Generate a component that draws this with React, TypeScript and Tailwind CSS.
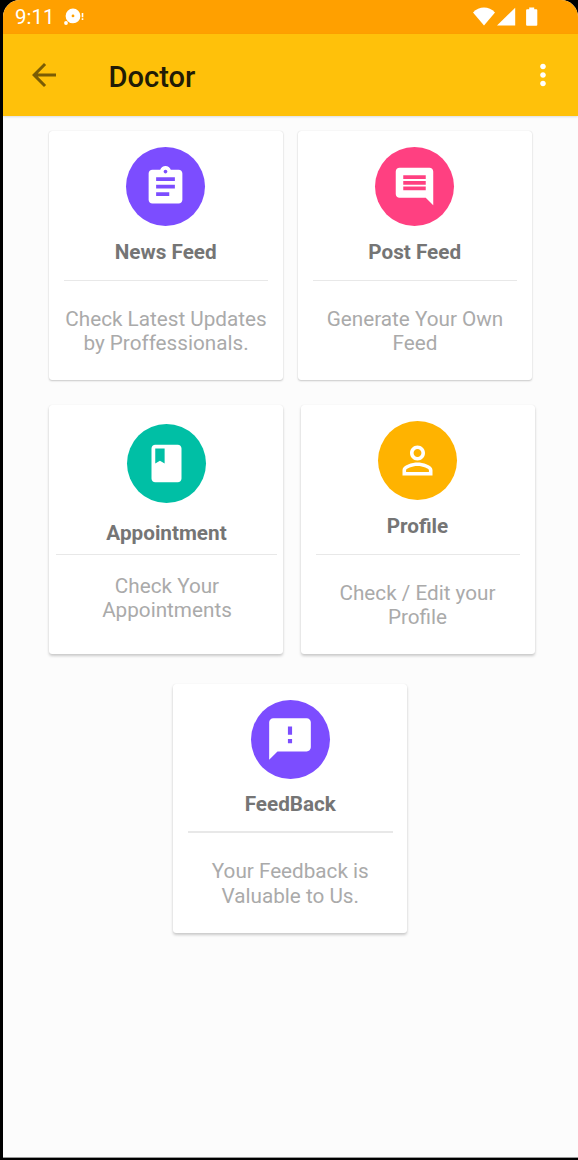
import React from "react";

const icons = {
  assignment:
    "M19 3h-4.18C14.4 1.84 13.3 1 12 1c-1.3 0-2.4.84-2.82 2H5c-1.1 0-2 .9-2 2v14c0 1.1.9 2 2 2h14c1.1 0 2-.9 2-2V5c0-1.1-.9-2-2-2zm-7 0c.55 0 1 .45 1 1s-.45 1-1 1-1-.45-1-1 .45-1 1-1zm2 14H7v-2h7v2zm3-4H7v-2h10v2zm0-4H7V7h10v2z",
  comment:
    "M21.99 4c0-1.1-.89-2-1.99-2H4c-1.1 0-2 .9-2 2v12c0 1.1.9 2 2 2h14l4 4-.01-18zM18 14H6v-2h12v2zm0-3H6V9h12v2zm0-3H6V6h12v2z",
  book: "M18 2H6c-1.1 0-2 .9-2 2v16c0 1.1.9 2 2 2h12c1.1 0 2-.9 2-2V4c0-1.1-.9-2-2-2zM6 4h5v8l-2.5-1.5L6 12V4z",
  person:
    "M12 5.9c1.16 0 2.1.94 2.1 2.1s-.94 2.1-2.1 2.1S9.9 9.16 9.9 8s.94-2.1 2.1-2.1m0 9c2.97 0 6.1 1.46 6.1 2.1v1.1H5.9V17c0-.64 3.13-2.1 6.1-2.1M12 4C9.79 4 8 5.79 8 8s1.79 4 4 4 4-1.79 4-4-1.79-4-4-4zm0 9c-2.67 0-8 1.34-8 4v3h16v-3c0-2.66-5.33-4-8-4z",
  feedback:
    "M20 2H4c-1.1 0-1.99.9-1.99 2L2 22l4-4h14c1.1 0 2-.9 2-2V4c0-1.1-.9-2-2-2zm-7 12h-2v-2h2v2zm0-4h-2V6h2v4z",
};

type CardProps = {
  icon: keyof typeof icons;
  iconSize?: string;
  color: string;
  title: string;
  lines: [string, string];
  shadow?: string;
  pad?: string;
  circleInset?: string;
  titleGap?: string;
  rule?: string;
  textGap?: string;
};

function Card({
  icon,
  iconSize = "size-[45px]",
  color,
  title,
  lines,
  shadow = "shadow-[0_1px_2px_rgba(0,0,0,0.2),0_0_1px_rgba(0,0,0,0.15)]",
  pad = "pt-4",
  circleInset = "mr-[1.2px]",
  titleGap = "mt-[13.5px] mr-[0.6px]",
  rule = "mt-4 w-[204px] h-px",
  textGap = "mt-[26px]",
}: CardProps) {
  return (
    <button className={`flex h-[249px] w-[234px] shrink-0 flex-col items-center rounded-[3px] bg-white ${shadow} ${pad}`}>
      <span className={`flex size-[79px] shrink-0 items-center justify-center rounded-full ${color} ${circleInset}`}>
        <svg viewBox="0 0 24 24" className={`${iconSize} fill-white`}>
          <path d={icons[icon]} />
        </svg>
      </span>
      <span className={`text-[20.7px] leading-6 font-bold text-[#757575] ${titleGap}`}>{title}</span>
      <span className={`shrink-0 bg-[#e8e8e8] ${rule}`} />
      <span className={`text-[20.7px] leading-[24.3px] whitespace-nowrap text-[#aaaaaa] ${textGap}`}>
        {lines[0]}
        <br />
        {lines[1]}
      </span>
    </button>
  );
}

function StatusBar() {
  return (
    <div className="flex h-[34px] items-center bg-[#ffa000] pl-3 text-white">
      <span className="text-[20.5px] leading-6">9:11</span>
      <svg viewBox="0 0 22 20" className="ml-2 h-5 w-[22px] fill-white">
        <path fillRule="evenodd" d="M10 1.5a7.4 7.4 0 1 1 0 14.8 7.4 7.4 0 0 1 0-14.8zm0 6a1.4 1.4 0 1 0 0 2.8 1.4 1.4 0 0 0 0-2.8z" />
        <circle cx="3" cy="16" r="1.9" />
        <path d="M18.7 6h1.6v4.2h-1.6zM18.7 11.3h1.6v1.6h-1.6z" />
      </svg>
      <svg viewBox="0 0 66 20" className="mr-[39px] ml-auto h-5 w-[66px] fill-white">
        <path d="M0 5.4C6-1.2 16-1.2 22 5.4L11 18.6z" />
        <path d="M24 18.5 42.2.7v17.8z" />
        <path d="M56.2.6h5v1.7h2.1q1 0 1 1v14.5q0 1-1 1h-9.2q-1 0-1-1V3.3q0-1 1-1h2.1z" />
      </svg>
    </div>
  );
}

function AppBar() {
  return (
    <header className="flex h-[82px] items-center bg-[#ffc10a] shadow-[0_1px_2px_rgba(0,0,0,0.12)]">
      <svg viewBox="0 0 24 24" className="ml-[23px] size-9 fill-[#7a5c05]">
        <path d="M20 11H7.83l5.59-5.59L12 4l-8 8 8 8 1.41-1.41L7.83 13H20v-2z" />
      </svg>
      <h1 className="mt-[3px] ml-[46.5px] text-[29.1px] leading-9 font-medium text-[#211b06]">Doctor</h1>
      <svg viewBox="0 0 24 24" className="mr-[18px] ml-auto size-[34px] fill-white">
        <path d="M12 8c1.1 0 2-.9 2-2s-.9-2-2-2-2 .9-2 2 .9 2 2 2zm0 2c-1.1 0-2 .9-2 2s.9 2 2 2 2-.9 2-2-.9-2-2-2zm0 6c-1.1 0-2 .9-2 2s.9 2 2 2 2-.9 2-2-.9-2-2-2z" />
      </svg>
    </header>
  );
}

export default function App() {
  const raised = "shadow-[0_2px_3px_rgba(0,0,0,0.2),0_0_1px_rgba(0,0,0,0.1)]";
  return (
    <div className="h-[1160px] w-[578px] overflow-hidden bg-black pl-[3px] font-[Roboto,sans-serif]">
      <div className="flex h-[1158px] flex-col overflow-hidden rounded-t-[17px] border-b border-[#999999] bg-[#fcfcfc]">
        <StatusBar />
        <AppBar />
        <main className="flex flex-col pt-[15px]">
          <div className="flex gap-[15px] pl-[46px]">
            <Card icon="assignment" color="bg-[#7c4dff]" title="News Feed" lines={["Check Latest Updates", "by Proffessionals."]} />
            <Card icon="comment" color="bg-[#ff4081]" title="Post Feed" lines={["Generate Your Own", "Feed"]} />
          </div>
          <div className="mt-[25px] flex gap-[17.5px] pl-[46px]">
            <Card
              icon="book"
              color="bg-[#00bfa5]"
              title="Appointment"
              lines={["Check Your", "Appointments"]}
              shadow={raised}
              pad="pt-[19px] pl-[2px]"
              circleInset="mr-[2px]"
              titleGap="mt-[18px] mr-[1px]"
              rule="mt-[8.5px] mr-px w-[221px] h-px"
              textGap="mt-[19px]"
            />
            <Card
              icon="person"
              color="bg-[#ffb300]"
              title="Profile"
              lines={["Check / Edit your", "Profile"]}
              shadow={raised}
              circleInset="mr-0"
              titleGap="mt-[13.5px]"
            />
          </div>
          <div className="mt-[30px] flex pl-[170.3px]">
            <Card
              icon="feedback"
              iconSize="size-[50px]"
              color="bg-[#7c4dff]"
              title="FeedBack"
              lines={["Your Feedback is", "Valuable to Us."]}
              shadow={raised}
              pad="pt-[15.5px]"
              circleInset="mr-0"
              titleGap="mt-[13.4px]"
              rule="mt-[15.6px] w-[205px] h-[2px]"
            />
          </div>
        </main>
      </div>
    </div>
  );
}
